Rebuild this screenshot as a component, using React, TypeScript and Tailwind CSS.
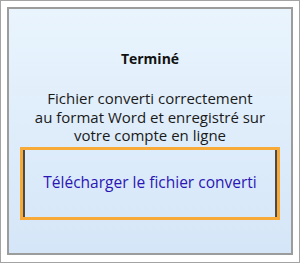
export default function App() {
  return (
    <div
      className="w-[300px] h-[263px] border border-[#a3a3a3] bg-white pt-[6px] px-[6px] pb-[7px] box-border"
      style={{ fontFamily: '"Open Sans", "Noto Sans", sans-serif' }}
    >
      <div className="h-full w-full border-2 border-[#9c9c9c] bg-gradient-to-b from-[#e9f4fd] to-[#d5e6f8] flex flex-col items-center">
        <div className="mt-[41px] text-[14px] font-bold text-[#111] leading-[18px]">Terminé</div>
        <div className="mt-[21px] text-[15px] text-[#1a1a1a] leading-[18.5px] text-center">
          Fichier converti correctement
          <br />
          au format Word et enregistré sur
          <br />
          votre compte en ligne
        </div>
        <div className="mt-[2px] w-[260px] h-[73px] border-[3px] border-[#f7aa38] flex items-center justify-center relative">
          <div className="absolute left-0 top-0 bottom-0 w-[2px] bg-[#4a4a4a]" />
          <div className="absolute right-0 top-0 bottom-0 w-[2px] bg-[#4a4a4a]" />
          <span className="text-[15.5px] text-[#2a16b4]">Télécharger le fichier converti</span>
        </div>
      </div>
    </div>
  );
}
